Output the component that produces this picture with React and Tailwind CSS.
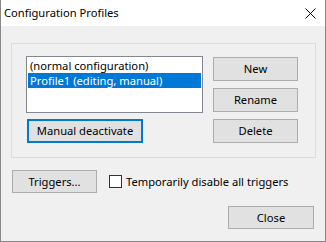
export default function App() {
  return (
    <div
      className="w-[326px] h-[242px] flex flex-col border border-t-0 border-[#888888] text-[11.2px] text-black overflow-hidden"
      style={{ fontFamily: '"Noto Sans", "Liberation Sans", sans-serif' }}
    >
      {/* Title bar */}
      <div className="h-[26px] bg-white flex items-center justify-between pl-[3px] pr-[9px] shrink-0">
        <span className="leading-none">Configuration Profiles</span>
        <svg width="11" height="11" viewBox="0 0 11 11" className="block">
          <path d="M0.5 0.5 L10.5 10.5 M10.5 0.5 L0.5 10.5" stroke="#000" strokeWidth="1" />
        </svg>
      </div>

      <div className="flex-1 bg-[#f0f0f0] pl-[10px] pt-[17px]">
        {/* Group box */}
        <div className="w-[305px] h-[115px] border border-[#dcdcdc] flex pl-[14px] pt-[12px]">
          <div className="flex flex-col w-[177px]">
            <div className="h-[57px] border border-[#828790] bg-white p-[1px]">
              <div className="h-[15px] flex items-center pl-[2px] leading-[15px]">(normal configuration)</div>
              <div className="h-[15px] flex items-center pl-[2px] leading-[15px] bg-[#0078d7] text-white">
                Profile1 (editing, manual)
              </div>
            </div>
            <button className="ml-[1px] mt-[6px] w-[116px] h-[24px] border-2 border-[#0078d7] bg-[#e1e1e1] flex items-center justify-center leading-none">
              Manual deactivate
            </button>
          </div>
          <div className="flex flex-col gap-[7px] ml-[10px] mt-[1px]">
            <WinButton label="New" className="w-[85px] h-[24px]" />
            <WinButton label="Rename" className="w-[85px] h-[24px]" />
            <WinButton label="Delete" className="w-[85px] h-[24px]" />
          </div>
        </div>

        {/* Triggers row */}
        <div className="flex items-center mt-[12px] ml-[1px]">
          <WinButton label="Triggers..." className="w-[85px] h-[23px]" />
          <div className="ml-[12px] w-[13px] h-[13px] border border-[#333333] bg-white" />
          <span className="ml-[4px] leading-none">Temporarily disable all triggers</span>
        </div>

        <div className="flex justify-end mt-[13px] pr-[11px]">
          <WinButton label="Close" className="w-[86px] h-[23px]" />
        </div>
      </div>
    </div>
  );
}

function WinButton({ label, className }) {
  return (
    <button
      className={`border border-[#adadad] bg-[#e1e1e1] flex items-center justify-center leading-none ${className}`}
    >
      {label}
    </button>
  );
}
